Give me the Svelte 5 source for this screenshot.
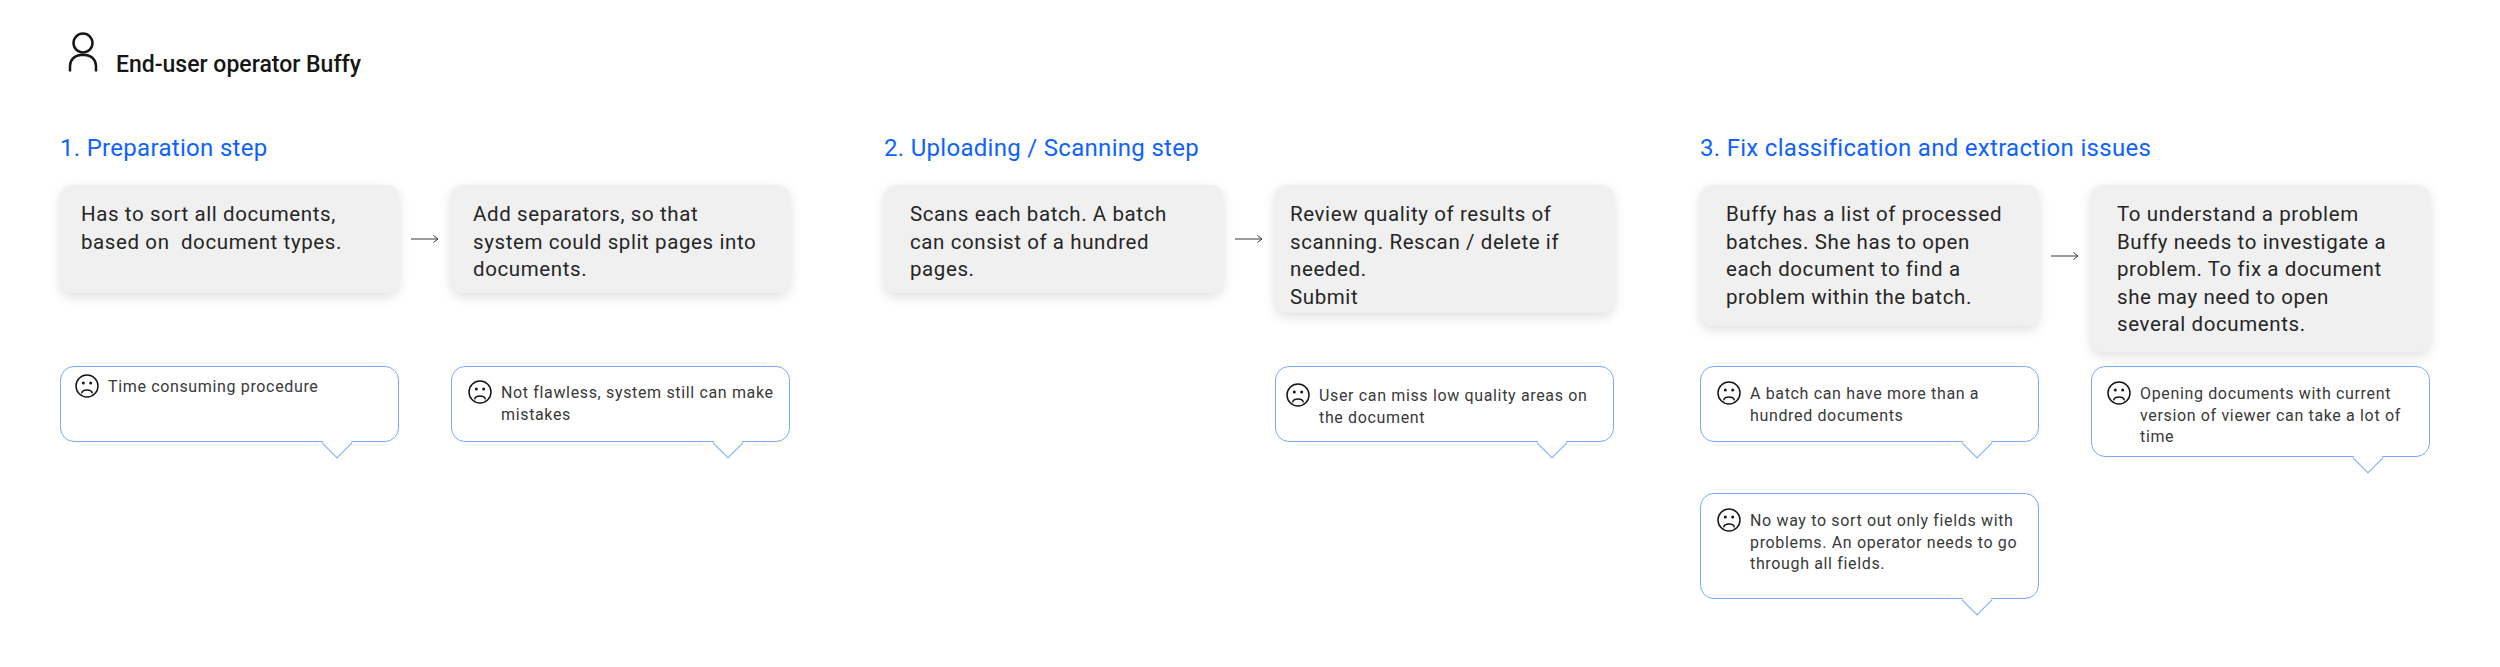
<script>
  const sections = [
    {
      title: "1. Preparation step",
      gap: 94,
      cards: [
        { text: "Has to sort all documents,\nbased on  document types.", pad: 21, height: 108 },
        { text: "Add separators, so that\nsystem could split pages into\ndocuments.", pad: 22, height: 108 },
      ],
      notes: [
        [{ text: "Time consuming procedure", pad: "7px 14px", height: 76 }],
        [{ text: "Not flawless, system still can make\nmistakes", pad: "13px 16px", height: 76 }],
      ],
    },
    {
      title: "2. Uploading / Scanning step",
      gap: 86,
      cards: [
        { text: "Scans each batch. A batch\ncan consist of a hundred\npages.", pad: 26, height: 108 },
        { text: "Review quality of results of\nscanning. Rescan / delete if\nneeded.\nSubmit", pad: 15, height: 128 },
      ],
      notes: [
        [],
        [{ text: "User can miss low quality areas on\nthe document", pad: "16px 10px", height: 76 }],
      ],
    },
    {
      title: "3. Fix classification and extraction issues",
      gap: 0,
      cards: [
        { text: "Buffy has a list of processed\nbatches. She has to open\neach document to find a\nproblem within the batch.", pad: 26, height: 141 },
        { text: "To understand a problem\nBuffy needs to investigate a\nproblem. To fix a document\nshe may need to open\nseveral documents.", pad: 26, height: 167 },
      ],
      notes: [
        [
          { text: "A batch can have more than a\nhundred documents", pad: "14px 16px", height: 76 },
          { text: "No way to sort out only fields with\nproblems. An operator needs to go\nthrough all fields.", pad: "14px 16px", height: 106 },
        ],
        [{ text: "Opening documents with current\nversion of viewer can take a lot of\ntime", pad: "14px 15px", height: 91 }],
      ],
    },
  ];
</script>

<div class="page">
  <header class="persona">
    <svg width="30" height="42" viewBox="0 0 30 42" fill="none" stroke="#161616" stroke-width="2.5" aria-hidden="true">
      <circle cx="15" cy="11" r="9.5" />
      <path d="M2 39.500V34A11 11 0 0 1 13 23H17A11 11 0 0 1 28 34V39.500" />
    </svg>
    <span>End-user operator Buffy</span>
  </header>

  <div class="steps">
    {#each sections as section}
      <section class="step" style:margin-right="{section.gap}px">
        <h2>{section.title}</h2>

        <div class="cards">
          <div class="first">
            <div class="card" style:padding-left="{section.cards[0].pad}px" style:height="{section.cards[0].height}px">{section.cards[0].text}</div>
            <div class="arrow">
              <svg width="28" height="10" viewBox="0 0 28 10" fill="none" stroke="#393939" stroke-width="1" aria-hidden="true">
                <path d="M0 5H27M22.500 1.500L27 5L22.500 8.500" />
              </svg>
            </div>
          </div>
          <div class="card" style:padding-left="{section.cards[1].pad}px" style:height="{section.cards[1].height}px">{section.cards[1].text}</div>
        </div>

        <div class="notes">
          {#each section.notes as column}
            <div class="note-col">
              {#each column as note}
                <div class="note" style:padding={note.pad} style:height="{note.height}px">
                  <svg class="sad" width="24" height="24" viewBox="0 0 24 24" fill="none" stroke="#161616" stroke-width="1.500" aria-hidden="true">
                    <circle cx="12" cy="12" r="11" />
                    <circle cx="8.300" cy="9" r="1.500" fill="#161616" stroke="none" />
                    <circle cx="15.700" cy="9" r="1.500" fill="#161616" stroke="none" />
                    <path d="M6.800 18.800C8 15.200 16 15.200 17.200 18.800" stroke-linecap="round" />
                  </svg>
                  <p>{note.text}</p>
                </div>
              {/each}
            </div>
          {/each}
        </div>
      </section>
    {/each}
  </div>
</div>

<style>
  :global(body) {
    background: #fff;
  }

  .page {
    padding: 32px 0 40px 60px;
    font-family: Roboto, "Noto Sans", sans-serif;
    color: #262626;
  }

  .persona {
    display: flex;
    align-items: flex-end;
    gap: 18px;
    margin-left: 8px;
    height: 42px;
  }

  .persona span {
    font-size: 23px;
    font-weight: 500;
    line-height: 28px;
    color: #161616;
    margin-bottom: -5px;
  }

  .steps {
    display: flex;
    align-items: flex-start;
    margin-top: 58px;
  }

  .step {
    width: 730px;
    flex: none;
  }

  h2 {
    margin: 0;
    height: 53px;
    font-size: 24px;
    font-weight: 400;
    line-height: 32px;
    letter-spacing: 0.3px;
    color: #0f62fe;
  }

  .cards {
    display: flex;
    align-items: flex-start;
    height: 181px;
  }

  .first {
    display: flex;
    align-items: center;
  }

  .card {
    box-sizing: border-box;
    width: 339px;
    flex: none;
    padding-top: 16px;
    background: #f0f0f0;
    border-radius: 12px;
    box-shadow: 0 4px 12px rgba(0, 0, 0, 0.13);
    font-size: 20.500px;
    line-height: 27.500px;
    letter-spacing: 0.6px;
    white-space: pre-wrap;
  }

  .arrow {
    width: 52px;
    display: flex;
    justify-content: center;
  }

  .notes {
    display: flex;
    gap: 52px;
  }

  .note-col {
    width: 339px;
    display: flex;
    flex-direction: column;
    gap: 51px;
  }

  .note {
    box-sizing: border-box;
    position: relative;
    display: flex;
    gap: 9px;
    background: #fff;
    border: 1.750px solid #78a9ff;
    border-radius: 14px;
  }

  .note::after {
    content: "";
    position: absolute;
    right: 50px;
    bottom: -13px;
    width: 22px;
    height: 22px;
    box-sizing: border-box;
    background: #fff;
    border-right: 1.750px solid #78a9ff;
    border-bottom: 1.750px solid #78a9ff;
    transform: rotate(45deg);
  }

  .sad {
    flex: none;
  }

  .note p {
    margin: 2px 0 0;
    font-size: 16px;
    line-height: 21.500px;
    letter-spacing: 0.65px;
    color: #393939;
    white-space: pre;
  }
</style>
